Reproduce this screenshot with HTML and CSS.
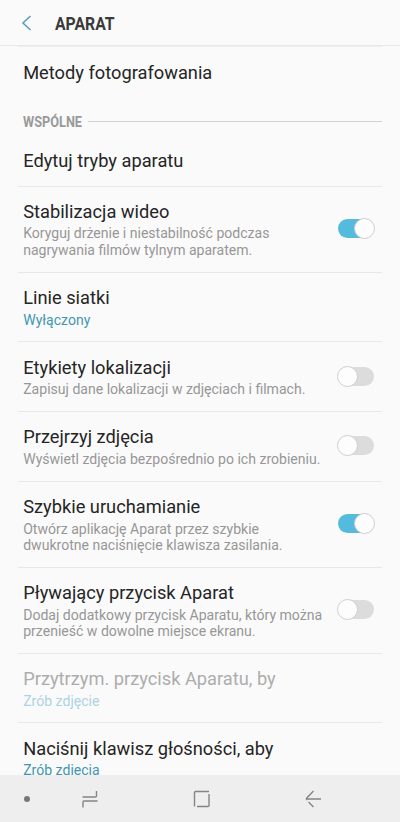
FILE: index.html
```html
<!DOCTYPE html>
<html lang="pl">
<head>
<meta charset="utf-8">
<title>Aparat</title>
<link rel="stylesheet" href="styles.css">
</head>
<body>
<div class="screen">
<header class="bar">
<svg class="back" width="12" height="18" viewBox="0 0 12 18"><path d="M9.500 2L2 9L9.500 16"/></svg>
<h1>APARAT</h1>
</header>
<main class="list">
<section class="row methods"><h2>Metody fotografowania</h2></section>
<div class="group"><span>WSPÓLNE</span><i></i></div>
<section class="row modes"><h2>Edytuj tryby aparatu</h2></section>
<section class="row three"><div><h2>Stabilizacja wideo</h2><p>Koryguj drżenie i niestabilność podczas<br>nagrywania filmów tylnym aparatem.</p></div><span class="switch on"></span></section>
<section class="row two"><div><h2>Linie siatki</h2><p class="value">Wyłączony</p></div></section>
<section class="row two"><div><h2>Etykiety lokalizacji</h2><p>Zapisuj dane lokalizacji w zdjęciach i filmach.</p></div><span class="switch"></span></section>
<section class="row two"><div><h2>Przejrzyj zdjęcia</h2><p>Wyświetl zdjęcia bezpośrednio po ich zrobieniu.</p></div><span class="switch"></span></section>
<section class="row three"><div><h2>Szybkie uruchamianie</h2><p>Otwórz aplikację Aparat przez szybkie<br>dwukrotne naciśnięcie klawisza zasilania.</p></div><span class="switch on"></span></section>
<section class="row three"><div><h2>Pływający przycisk Aparat</h2><p>Dodaj dodatkowy przycisk Aparatu, który można<br>przenieść w dowolne miejsce ekranu.</p></div><span class="switch"></span></section>
<section class="row two disabled"><div><h2>Przytrzym. przycisk Aparatu, by</h2><p class="value">Zrób zdjęcie</p></div></section>
<section class="row two"><div><h2>Naciśnij klawisz głośności, aby</h2><p class="value">Zrób zdjęcia</p></div></section>
</main>
<nav class="nav">
<svg width="400" height="47" viewBox="0 0 400 47"><circle cx="27" cy="24" r="3"/><path d="M82.500 22H95.500Q96.500 22 96.500 21V16M97.500 26H84Q83 26 83 27V32.500M197 31.500H208Q209 31.500 209 30.500V19M209 16.500H195.500Q194.500 16.500 194.500 17.500V31.500M321 24H307M313.500 16L307 22.800Q306 24 307 25M308.500 27L313.500 32"/></svg>
</nav>
</div>
</body>
</html>
```

FILE: styles.css
```css
* { box-sizing: border-box; }
body { margin: 0; font-family: Roboto, sans-serif; background: #fafafa; }
.screen { width: 400px; height: 822px; display: flex; flex-direction: column; overflow: hidden; }
.bar { height: 46px; flex: none; display: flex; align-items: center; padding-left: 21px; border-bottom: 1px solid #e8e8e8; }
.back { fill: none; stroke: #5a9fbc; stroke-width: 1.6; }
h1 { margin: 2px 0 0 21.500px; font-size: 17.5px; line-height: 20px; font-weight: 700; color: #3a3a3a; transform: scaleX(.9); transform-origin: left; }
.list { flex: 1; min-height: 0; overflow: hidden; padding: 0 18px; }
.row { display: flex; justify-content: space-between; align-items: center; padding: 1px 8px 0 5.200px; border-bottom: 1px solid #e8e8e8; white-space: nowrap; }
.methods { height: 54px; padding: 0 8px 2px 5.200px; border-top: 1px solid #eee; border-bottom: 0; }
.modes { height: 50px; padding-top: 0; }
.three { height: 86px; }
.two { height: 69.700px; }
h2 { margin: 0; font-size: 18.250px; line-height: 22px; font-weight: 400; color: #252525; }
p { margin: 2.500px 0 0; font-size: 14.050px; line-height: 16.500px; color: #979797; }
.value { color: #4297b0; }
.disabled h2 { color: #adadad; }
.disabled .value { color: #acd3e3; }
.group { height: 36.700px; display: flex; align-items: center; padding: 7px 0 0 5.200px; font-size: 14px; font-weight: 700; color: #999; }
.group span { width: 65px; transform: scaleX(.91); transform-origin: left; }
.group i { flex: 1; height: 1px; background: #d2d2d2; }
.switch { flex: none; width: 36px; height: 19px; margin-bottom: 2px; border-radius: 10px; background: #dcdcdc; position: relative; }
.switch::after { content: ""; box-sizing: border-box; position: absolute; left: -1px; top: -1px; width: 21px; height: 21px; border-radius: 50%; background: #fdfdfd; border: 1px solid #cecece; }
.switch.on { background: #55bbdc; }
.switch.on::after { left: 15.500px; }
.nav { height: 47px; flex: none; background: #eee; }
.nav svg { display: block; fill: none; stroke: #858585; stroke-width: 1.4; }
.nav circle { fill: #777; stroke: none; }
```
